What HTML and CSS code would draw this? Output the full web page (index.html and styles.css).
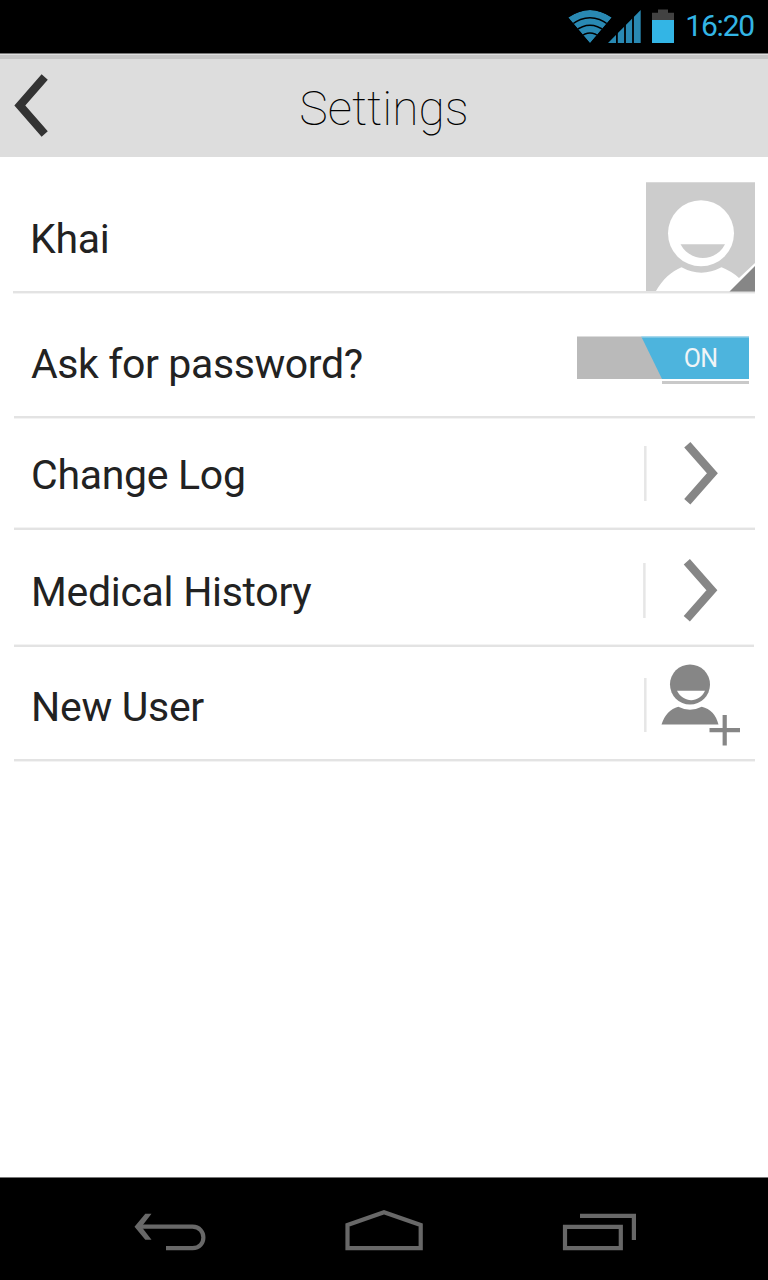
FILE: index.html
```html
<!DOCTYPE html>
<html lang="en">
<head>
<meta charset="utf-8">
<title>Settings</title>
<link rel="stylesheet" href="styles.css">
</head>
<body>
<div class="screen">
  <div class="status">
    <svg class="status-icons" width="110" height="53" viewBox="568 0 110 53">
      <defs><clipPath id="fan"><path d="M590 43.2L568.2 17.6Q590 2.5 611.8 17.6Z"/></clipPath></defs>
      <g clip-path="url(#fan)">
        <path d="M590 43.2L568.2 17.6Q590 2.5 611.8 17.6Z" fill="#2989b3"/>
        <g fill="none" stroke="#000" stroke-width="1.5">
          <path d="M571 25Q590 10.500 609 25"/>
          <path d="M575 31Q590 19.400 605 31"/>
          <path d="M580 37Q590 28.800 600 37"/>
        </g>
      </g>
      <path d="M608 43L640.700 10V43Z" fill="#2989b3"/>
      <path d="M616.900 10V43M625 10V43M633 10V43" stroke="#000" stroke-width="1.800"/>
      <path d="M652 20V12.800H658V9.500H668V12.800H674V20Z" fill="#424242"/>
      <path d="M652 20H674V43H652Z" fill="#33b5e5"/>
    </svg>
    <span class="clock">16:20</span>
  </div>

  <header class="header">
    <svg class="back" width="60" height="98" viewBox="0 59 60 98"><path d="M44.700 77L19.800 105.500L44.700 134" fill="none" stroke="#333" stroke-width="8.200"/></svg>
    <h1 class="title">Settings</h1>
  </header>

  <main class="list">
    <div class="row row-profile">
      <span class="label">Khai</span>
      <svg class="avatar" width="109" height="110" viewBox="646 182 109 110">
        <path d="M646 182.300H755V291H646Z" fill="#ccc"/>
        <circle cx="701" cy="233.300" r="33" fill="#fff"/>
        <path d="M680.500 244.200H725C716 262.500 690 262.500 680.500 244.200Z" fill="#ccc"/>
        <path d="M656 291C662 280 672 271 681.500 267.300Q701 278 721.500 267.300Q732 271.500 739 278L755 263V291Z" fill="#fff"/>
        <path d="M729.500 291.500L755 266V291.500Z" fill="#868686"/>
      </svg>
    </div>
    <div class="row row-password">
      <span class="label">Ask for password?</span>
      <div class="toggle"><div class="thumb">ON</div></div>
    </div>
    <div class="row row-log">
      <span class="label">Change Log</span>
      <svg width="125" height="108" viewBox="630 419 125 108">
        <path d="M645.300 446V501" stroke="#e6e6e6" stroke-width="2.500"/>
        <path d="M687.300 444.800L712.400 473.300L687.300 501.800" fill="none" stroke="#868686" stroke-width="8.200"/>
      </svg>
    </div>
    <div class="row row-history">
      <span class="label">Medical History</span>
      <svg width="125" height="114" viewBox="630 530 125 114">
        <path d="M644.400 563V618" stroke="#e6e6e6" stroke-width="2.500"/>
        <path d="M686.800 561.800L711.900 590.300L686.800 618.800" fill="none" stroke="#868686" stroke-width="8.200"/>
      </svg>
    </div>
    <div class="row row-user">
      <span class="label">New User</span>
      <svg width="125" height="112" viewBox="630 647 125 112">
        <path d="M645.300 678V732" stroke="#e6e6e6" stroke-width="2.500"/>
        <g fill="#868686">
          <circle cx="690" cy="684.500" r="20"/>
          <path d="M661.500 724.500C664.500 715 670.500 708.500 678.300 706.700Q690 712.700 701.700 706.700C710.500 708.500 716.200 715 718.500 724.500Z"/>
          <path d="M722.600 715H726.800V728H740V732.300H726.800V745.500H722.600V732.300H709.500V728H722.600Z"/>
        </g>
        <path d="M677 690.700H705C699 703.300 683.500 703.300 677 690.700Z" fill="#fff"/>
      </svg>
    </div>
  </main>

  <nav class="nav">
    <svg width="768" height="102" viewBox="0 1178 768 102">
      <g fill="none" stroke="#686868" stroke-width="4.200">
        <path d="M140 1226.700H192.500C207 1226.700 207 1248.200 192.500 1248.200H166"/>
        <path d="M347.500 1248.200V1225L384 1212.300L420.700 1225V1248.200Z"/>
        <path d="M565 1226.800H620.800V1248.200H565Z"/>
        <path d="M580 1215.900H633.900V1240"/>
      </g>
      <path d="M134.500 1226.700L145.300 1213.800H151.500L141.500 1226.700L151.500 1239.700H145.300Z" fill="#686868"/>
    </svg>
  </nav>
</div>
</body>
</html>
```
FILE: styles.css
```css
body {
  margin: 0;
  background: #fff;
  font-family: Roboto, "Liberation Sans", sans-serif;
}

.screen {
  display: flex;
  flex-direction: column;
  width: 768px;
  height: 1280px;
}

svg {
  display: block;
  flex: none;
}

.status {
  display: flex;
  justify-content: flex-end;
  height: 53px;
  background: #000;
}

.clock {
  width: 76px;
  margin-right: 14px;
  line-height: 51px;
  font-size: 30px;
  letter-spacing: -1.2px;
  text-align: right;
  color: #33b5e5;
}

.header {
  display: grid;
  grid-template-columns: 60px 1fr 60px;
  box-sizing: border-box;
  height: 104px;
  padding-top: 6px;
  background: linear-gradient(#777 0 1px, #dedede 1px 2px, #c5c5c5 2px 6px, #ddd 6px);
}

.title {
  margin: 0;
  line-height: 100px;
  font-size: 48px;
  font-weight: 100;
  text-align: center;
  color: #000;
}

.list {
  flex: 1;
}

.row {
  display: flex;
  align-items: flex-start;
  justify-content: space-between;
  box-sizing: border-box;
  margin: 0 13px 0 14px;
  background: linear-gradient(#e3e3e3 0 2px, #f3f3f3 2px) bottom / 100% 3px no-repeat;
}

.row-log,
.row-history {
  background-image: linear-gradient(#f3f3f3 0 1px, #e3e3e3 1px);
}

.label {
  padding-left: 17px;
  line-height: 48px;
  font-size: 41px;
  letter-spacing: -0.3px;
  color: #222;
  white-space: nowrap;
}

.row-profile { height: 137px; margin-left: 13px; }
.row-password { height: 125px; }
.row-log { height: 111px; }
.row-history { height: 117px; margin-right: 14px; }
.row-user { height: 115px; }

.row-profile .label { padding-top: 58px; }
.row-password .label { padding-top: 46px; letter-spacing: -0.4px; }
.row-log .label { padding-top: 32px; }
.row-history .label { padding-top: 38px; }
.row-user .label { padding-top: 36px; }

.row-history svg { margin-right: -1px; }

.avatar {
  margin-top: 25px;
}

.toggle {
  display: flex;
  justify-content: flex-end;
  width: 172px;
  height: 48px;
  margin: 42px 6px 0 0;
  background:
    linear-gradient(#c9c9c9, #c9c9c9) 85px 45px / 87px 3px no-repeat,
    linear-gradient(#dcdcdc 0 1px, #bababa 1px) 0 0 / 100% 43px no-repeat;
}

.thumb {
  box-sizing: border-box;
  width: 108px;
  height: 43px;
  padding-left: 11px;
  background: linear-gradient(#a8d8ec 0 1px, #4db4dd 2px);
  clip-path: polygon(0 0, 100% 0, 100% 100%, 21px 100%);
  line-height: 45px;
  font-size: 25px;
  letter-spacing: -0.8px;
  text-align: center;
  color: #f0f5f7;
}

.nav {
  box-sizing: border-box;
  height: 103px;
  border-top: 1px solid #777;
  background: #000;
}
```
